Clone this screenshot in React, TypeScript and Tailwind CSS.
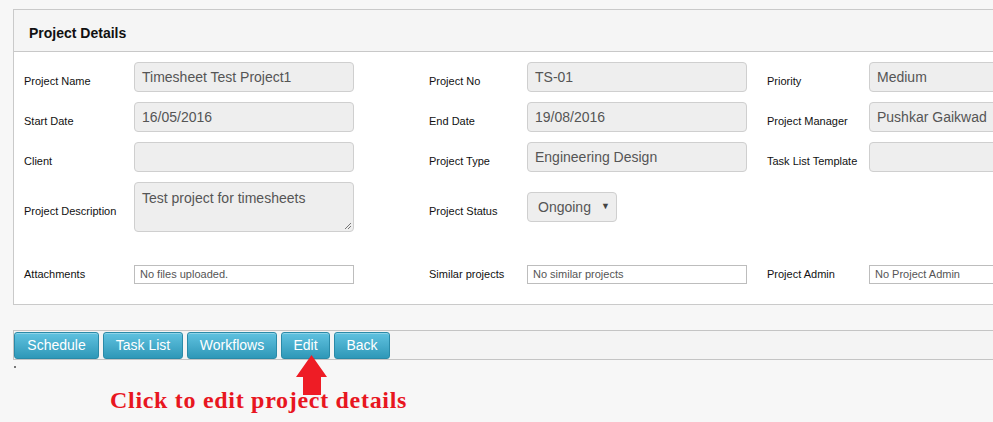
import React from "react";

const label = "text-[11px] text-[#111] pt-[9px] shrink-0";
const inp =
  "h-[30px] rounded-[4px] border border-[#cfcfcf] bg-[#eeeeee] px-[7px] text-[14px] text-[#555] flex items-center shrink-0";
const small =
  "h-[19px] border border-[#bdbdbd] bg-white px-[5px] text-[11px] text-[#555] flex items-center shrink-0";

function Btn({ children, w }: { children: React.ReactNode; w: string }) {
  return (
    <div
      className={`${w} h-[27px] rounded-[3px] bg-gradient-to-b from-[#5fc2e0] to-[#2e98b8] border border-[#2a8aa8] text-white text-[14px] flex items-center justify-center shadow-[inset_0_1px_0_rgba(255,255,255,0.3)]`}
    >
      {children}
    </div>
  );
}

export default function App() {
  return (
    <div
      className="w-[993px] h-[422px] overflow-hidden bg-[#f7f7f7] relative"
      style={{ fontFamily: '"Liberation Sans", Arial, sans-serif' }}
    >
      <div className="pt-[9px] pl-[13px]">
        <div className="w-[1000px] border border-[#cacaca] bg-white">
          <div className="h-[42px] bg-[#f5f5f5] border-b border-[#c8c8c8] flex items-center pl-[15px] pt-[5px] text-[14px] font-bold text-[#111]">
            Project Details
          </div>
          <div className="pl-[10px] pt-[10px] pb-[20px] flex flex-col">
            <div className="flex items-center h-[30px]">
              <div className={`${label} w-[110px]`}>Project Name</div>
              <div className={`${inp} w-[220px]`}>Timesheet Test Project1</div>
              <div className={`${label} w-[98px] ml-[75px]`}>Project No</div>
              <div className={`${inp} w-[220px]`}>TS-01</div>
              <div className={`${label} w-[102px] ml-[20px]`}>Priority</div>
              <div className={`${inp} w-[140px]`}>Medium</div>
            </div>
            <div className="flex items-center h-[30px] mt-[10px]">
              <div className={`${label} w-[110px]`}>Start Date</div>
              <div className={`${inp} w-[220px]`}>16/05/2016</div>
              <div className={`${label} w-[98px] ml-[75px]`}>End Date</div>
              <div className={`${inp} w-[220px]`}>19/08/2016</div>
              <div className={`${label} w-[102px] ml-[20px]`}>Project Manager</div>
              <div className={`${inp} w-[140px]`}>Pushkar Gaikwad</div>
            </div>
            <div className="flex items-center h-[30px] mt-[10px]">
              <div className={`${label} w-[110px]`}>Client</div>
              <div className={`${inp} w-[220px]`}></div>
              <div className={`${label} w-[98px] ml-[75px]`}>Project Type</div>
              <div className={`${inp} w-[220px]`}>Engineering Design</div>
              <div className={`${label} w-[102px] ml-[20px]`}>Task List Template</div>
              <div className={`${inp} w-[140px]`}></div>
            </div>
            <div className="flex items-center h-[50px] mt-[10px]">
              <div className={`${label} w-[110px]`}>Project Description</div>
              <div className="relative h-[50px] w-[220px] rounded-[4px] border border-[#cfcfcf] bg-[#eeeeee] px-[7px] pt-[5px] text-[14px] text-[#555] shrink-0">
                Test project for timesheets
                <svg className="absolute right-[1px] bottom-[1px]" width="8" height="8" viewBox="0 0 8 8">
                  <path d="M7 1 L1 7 M7 4 L4 7" stroke="#777" strokeWidth="1" />
                </svg>
              </div>
              <div className={`${label} w-[98px] ml-[75px]`}>Project Status</div>
              <div className="h-[30px] w-[90px] rounded-[4px] border border-[#cfcfcf] bg-[#eeeeee] pl-[10px] text-[14px] text-[#555] flex items-center shrink-0">
                Ongoing
                <span className="ml-[10px] text-[9px] text-[#444]">▼</span>
              </div>
            </div>
            <div className="flex items-center h-[19px] mt-[33px]">
              <div className="text-[11px] text-[#111] shrink-0 w-[110px]">Attachments</div>
              <div className={`${small} w-[220px]`}>No files uploaded.</div>
              <div className="text-[11px] text-[#111] shrink-0 w-[98px] ml-[75px]">Similar projects</div>
              <div className={`${small} w-[220px]`}>No similar projects</div>
              <div className="text-[11px] text-[#111] shrink-0 w-[102px] ml-[20px]">Project Admin</div>
              <div className={`${small} w-[140px]`}>No Project Admin</div>
            </div>
          </div>
        </div>
      </div>
      <div className="ml-[13px] mt-[25px] w-[1000px] h-[30px] border-t border-b border-l border-[#c4c4c4] bg-[#f4f4f4] flex items-start gap-[4px] pt-[1px]">
        <Btn w="w-[85px]">Schedule</Btn>
        <Btn w="w-[80px]">Task List</Btn>
        <Btn w="w-[90px]">Workflows</Btn>
        <Btn w="w-[49px]">Edit</Btn>
        <Btn w="w-[56px]">Back</Btn>
      </div>
      <div className="ml-[14px] mt-[6px] w-[2px] h-[2px] bg-[#777]"></div>
      <svg className="absolute left-[296px] top-[355px]" width="32" height="40" viewBox="0 0 32 40">
        <path d="M15.5 0 L31 22 L25 22 L25 40 L7 40 L7 22 L0 22 Z" fill="#ee1c25" />
      </svg>
      <div
        className="absolute left-[110px] top-[386px] text-[24px] leading-[28px] font-bold text-[#e8161f] tracking-[0.7px]"
        style={{ fontFamily: '"Liberation Serif", "Times New Roman", serif' }}
      >
        Click to edit project details
      </div>
    </div>
  );
}
